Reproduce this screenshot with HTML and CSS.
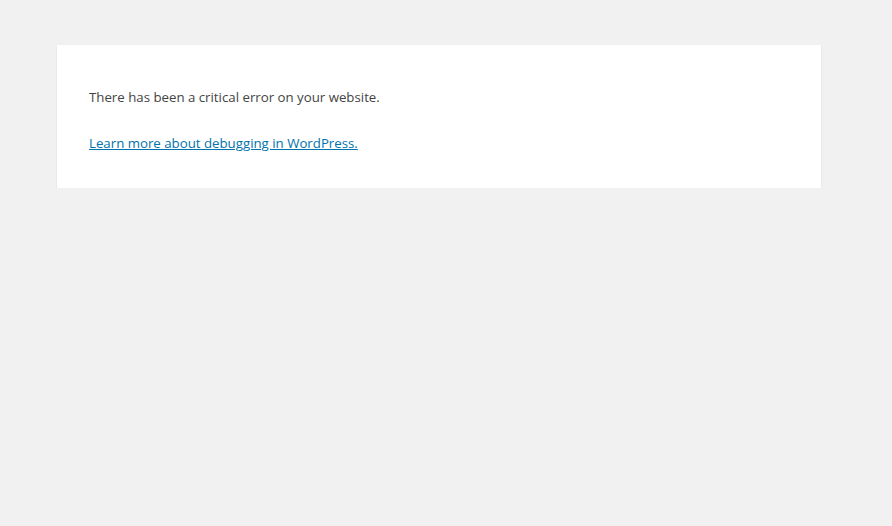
FILE: index.html
```html
<!DOCTYPE html>
<html lang="en">
<head>
<meta charset="utf-8">
<title>WordPress › Error</title>
<link rel="stylesheet" href="styles.css">
</head>
<body>
<div class="error-page">
  <div class="wp-die-message">There has been a critical error on your website.</div>
  <p><a href="#">Learn more about debugging in WordPress.</a></p>
</div>
</body>
</html>
```

FILE: styles.css
```css
html { background: #f1f1f1; }
body {
  margin: 0;
  padding: 45px 0 0 57px;
  font-family: "Open Sans", "Noto Sans", sans-serif;
  color: #444;
}
.error-page {
  box-sizing: border-box;
  width: 764px;
  background: #fff;
  padding: 1px 32px;
  box-shadow: 0 1px 2px rgba(0, 0, 0, .1);
}
.wp-die-message, .error-page p {
  font-size: 13.25px;
  line-height: 21px;
  margin: 41px 0 25px;
}
.error-page p { margin: 0 0 33px; }
.error-page a { color: #0073aa; }
```
